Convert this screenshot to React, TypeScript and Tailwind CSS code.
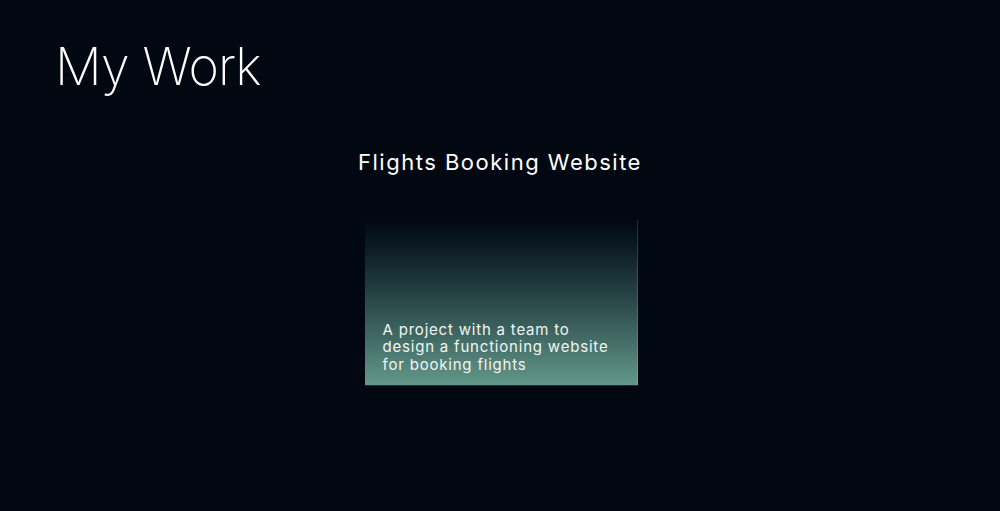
export default function App() {
  return (
    <div className="w-[1000px] h-[511px] bg-[#020812] text-white overflow-hidden" style={{ fontFamily: "Inter, 'Liberation Sans', sans-serif" }}>
      <div className="pl-[55px] pt-[35px]">
        <h1 className="text-[52px] leading-[64px] font-extralight tracking-[-0.8px]">My Work</h1>
      </div>
      <div className="flex flex-col items-center mt-[49px]">
        <h2 className="text-[22px] leading-[28px] font-normal tracking-[1.5px]">Flights Booking Website</h2>
        <div className="mt-[44px] ml-[2px] w-[273px] h-[166px] bg-gradient-to-b from-[#020812] to-[#62988a] flex flex-col justify-end px-[18px] pb-[12px] border-r border-b border-[#ffffff22]">
          <p className="w-[232px] text-[15px] leading-[17.5px] tracking-[0.8px] text-[#f2f5f3]">A project with a team to design a functioning website for booking flights</p>
        </div>
      </div>
    </div>
  );
}
